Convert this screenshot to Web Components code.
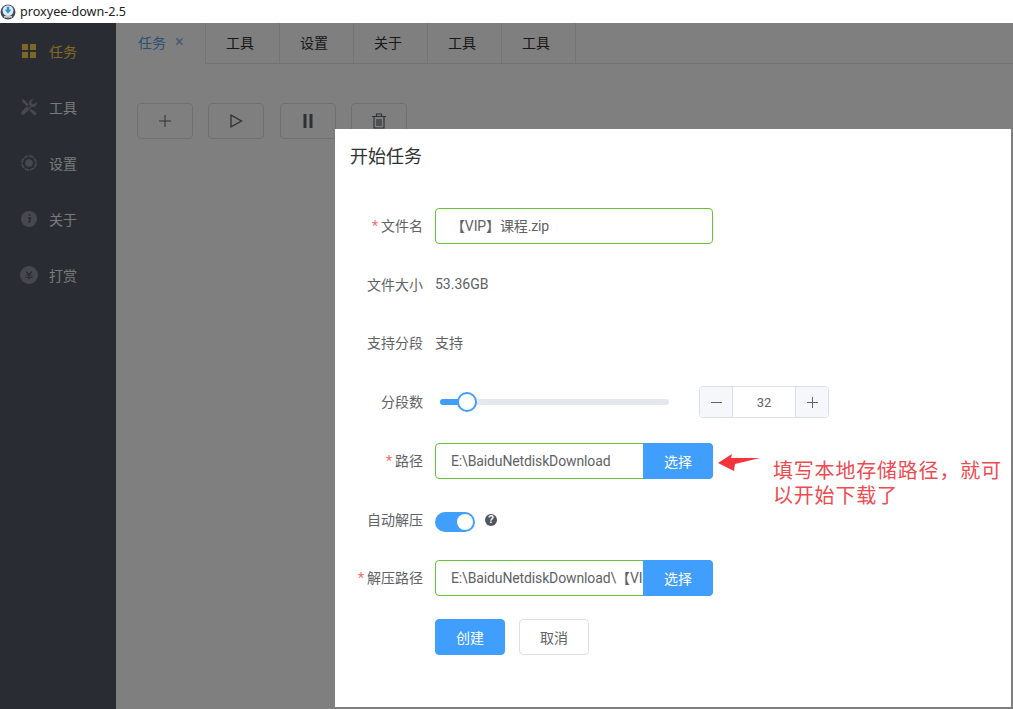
<!DOCTYPE html>
<html lang="en">
<head>
    <meta charset="UTF-8">
    <title>proxyee-down-2.5</title>
    <style>
        html, body { margin: 0; height: 709px; overflow: hidden; background: #fff; }
        body { font-family: Roboto, "Noto Sans CJK SC", sans-serif; font-size: 14px; }
        svg { display: block; }
    </style>
</head>
<body>
    <app-shell>
        <app-sidebar slot="sidebar">
            <menu-item active>
                <svg slot="icon" width="16" height="16" viewBox="0 0 16 16" fill="currentColor"><rect x="1" y="1" width="6" height="6"/><rect x="9" y="1" width="6" height="6"/><rect x="1" y="9" width="6" height="6"/><rect x="9" y="9" width="6" height="6"/></svg>
                任务
            </menu-item>
            <menu-item>
                <svg slot="icon" width="18" height="18" viewBox="0 0 18 18" fill="currentColor"><path d="M2 1l2.500 1 6 6-2 2-6-6zM13 1a4 4 0 0 0-3.800 5.300L1.800 13.500a1.900 1.900 0 0 0 2.700 2.700l7.200-7.400A4 4 0 0 0 16.800 4l-2.600 2.300-2.300-.7-.6-2.300L13.800 1z"/><path d="M11 11l-1.500 1.500 4 4.200a1.500 1.500 0 0 0 2.400-2.400z"/></svg>
                工具
            </menu-item>
            <menu-item>
                <svg slot="icon" width="18" height="18" viewBox="0 0 18 18" fill="none" stroke="currentColor"><circle cx="9" cy="9" r="7" stroke-width="1.800" stroke-dasharray="4.500 1"/><circle cx="9" cy="9" r="3.800" fill="currentColor" stroke="none"/></svg>
                设置
            </menu-item>
            <menu-item>
                <svg slot="icon" width="18" height="18" viewBox="0 0 18 18"><circle cx="9" cy="9" r="8" fill="currentColor"/><path d="M8.300 8h1.900L9.200 13.200M9.600 4.600v1.500" fill="none" stroke="#525865" stroke-width="1.800"/></svg>
                关于
            </menu-item>
            <menu-item>
                <svg slot="icon" width="18" height="18" viewBox="0 0 18 18"><circle cx="9" cy="9" r="9" fill="currentColor"/><path d="M6 5.500l3 3 3-3M5.500 9h7M5.500 11.300h7M9 8.500v5" fill="none" stroke="#525865" stroke-width="1.200"/></svg>
                打赏
            </menu-item>
        </app-sidebar>

        <tab-bar slot="tabs">
            <tab-item active closable>任务</tab-item>
            <tab-item>工具</tab-item>
            <tab-item>设置</tab-item>
            <tab-item>关于</tab-item>
            <tab-item>工具</tab-item>
            <tab-item>工具</tab-item>
        </tab-bar>

        <tool-bar slot="main">
            <tool-button>
                <svg width="14" height="14" viewBox="0 0 14 14" fill="none" stroke="currentColor"><path d="M7 1v12M1 7h12"/></svg>
            </tool-button>
            <tool-button>
                <svg width="14" height="14" viewBox="0 0 14 14" fill="none" stroke="currentColor" stroke-width="1.300"><path d="M2 1.200v11.600L12.500 7z"/></svg>
            </tool-button>
            <tool-button>
                <svg width="14" height="14" viewBox="0 0 14 14" fill="currentColor"><rect x="2.500" y="0" width="3" height="14"/><rect x="8.500" y="0" width="3" height="14"/></svg>
            </tool-button>
            <tool-button>
                <svg width="14" height="16" viewBox="0 0 14 16" fill="none" stroke="currentColor" stroke-width="1.200"><path d="M0 3.500h14M4.500 3.500V1h5v2.500M2 3.500v11.500h10V3.500M5 6v7M7 6v7M9 6v7"/></svg>
            </tool-button>
        </tool-bar>

        <start-dialog slot="dialog" heading="开始任务">
            <form-row label="文件名" required style="margin-bottom:1px">
                <field-box>【VIP】课程.zip</field-box>
            </form-row>
            <form-row label="文件大小"><span>53.36GB</span></form-row>
            <form-row label="支持分段"><span>支持</span></form-row>
            <form-row label="分段数" style="--row-height:38px">
                <range-slider percent="11.800"></range-slider>
                <number-box value="32"></number-box>
            </form-row>
            <form-row label="路径" required style="margin-bottom:1px">
                <field-box>E:\BaiduNetdiskDownload<action-button slot="append" primary>选择</action-button></field-box>
            </form-row>
            <form-row label="自动解压">
                <toggle-switch></toggle-switch>
                <help-mark></help-mark>
            </form-row>
            <form-row label="解压路径" required style="margin-bottom:1px">
                <field-box>E:\BaiduNetdiskDownload\【VI<action-button slot="append" primary>选择</action-button></field-box>
            </form-row>
            <form-row>
                <action-button primary>创建</action-button>
                <action-button style="margin-left:14px">取消</action-button>
            </form-row>
            <path-note slot="overlay"></path-note>
        </start-dialog>
    </app-shell>

    <script>
        function define(name, html) {
            const template = document.createElement('template')
            template.innerHTML = html
            customElements.define(name, class extends HTMLElement {
                constructor() {
                    super()
                    this.attachShadow({mode: 'open'})
                    this.shadowRoot.append(template.content.cloneNode(true))
                }
            })
        }

        define('app-shell', `
<style>
:host { display: flex; flex-direction: column; width: 1013px; height: 709px; position: relative; overflow: hidden; }
.title { flex: none; height: 23px; display: flex; align-items: center; gap: 4px; color: #222; font: 12.600px/23px "Noto Sans", sans-serif; background: #fff; }
.body { flex: 1; display: flex; min-height: 0; }
.side { flex: none; width: 116px; }
.content { flex: 1; background: #fff; min-width: 0; }
.mask { position: absolute; left: 0; right: 0; top: 23px; bottom: 0; background: rgba(0,0,0,.5); }
</style>
<div class="title">
    <svg width="16" height="16" viewBox="0 0 16 16"><circle cx="8" cy="8" r="7.500" fill="#444d57"/><circle cx="8" cy="6.600" r="5.400" fill="#dfeaf2"/><path d="M6.700 2.800h2.600v3h2L8 9.500 4.700 5.800h2z" fill="#2f8fd0"/><rect x="4" y="12.300" width="8" height="1.200" fill="#fff"/></svg>
    <span>proxyee-down-2.5</span>
</div>
<div class="body">
    <div class="side"><slot name="sidebar"></slot></div>
    <div class="content"><slot name="tabs"></slot><slot name="main"></slot></div>
</div>
<div class="mask"></div>
<slot name="dialog"></slot>
`)

        define('app-sidebar', `
<style>
:host { display: block; height: 686px; background: #525865; }
</style>
<slot></slot>
`)

        class MenuItem extends HTMLElement {
            constructor() {
                super()
                this.attachShadow({mode: 'open'})
                this.shadowRoot.innerHTML = `
<style>
:host { display: flex; align-items: center; height: 56px; padding-left: 20px; color: #f2f2f2; font-size: 14px; --icon: #8d919c; }
:host([active]) { color: #ffd04b; --icon: #ffd04b; }
.icon { width: 18px; height: 18px; margin-right: 11px; display: flex; align-items: center; justify-content: center; color: var(--icon); }
</style>
<span class="icon"><slot name="icon"></slot></span><slot></slot>`
            }
        }
        customElements.define('menu-item', MenuItem)

        define('tab-bar', `
<style>
:host { display: flex; height: 41px; box-sizing: border-box; padding-left: 1px; }
.fill { flex: 1; border-bottom: 1px solid #e4e7ed; }
</style>
<slot></slot><div class="fill"></div>
`)

        class TabItem extends HTMLElement {
            constructor() {
                super()
                this.attachShadow({mode: 'open'})
                this.shadowRoot.innerHTML = `
<style>
:host { display: flex; align-items: center; box-sizing: border-box; width: 74px; height: 41px; padding: 0 0 3px 20px; border-right: 1px solid #e4e7ed; border-bottom: 1px solid #e4e7ed; color: #303133; font-size: 14px; }
:host([active]) { width: 89px; padding-left: 21px; border-bottom-color: transparent; color: #5f9fe6; }
.close { margin-left: 9px; font-size: 16px; color: #8ab4e0; }
</style>
<slot></slot>`
                if (this.hasAttribute('closable')) {
                    const close = document.createElement('span')
                    close.className = 'close'
                    close.textContent = '×'
                    this.shadowRoot.append(close)
                }
            }
        }
        customElements.define('tab-item', TabItem)

        define('tool-bar', `
<style>
:host { display: flex; gap: 15.400px; padding: 39px 0 0 21px; }
</style>
<slot></slot>
`)

        define('tool-button', `
<style>
:host { display: flex; align-items: center; justify-content: center; box-sizing: border-box; width: 56px; height: 36px; border: 1px solid #dcdfe6; border-radius: 4px; color: #606266; }
</style>
<slot></slot>
`)

        class StartDialog extends HTMLElement {
            constructor() {
                super()
                this.attachShadow({mode: 'open'})
                this.shadowRoot.innerHTML = `
<style>
:host { position: absolute; left: 335px; top: 129px; width: 676px; height: 578px; box-sizing: border-box; background: #fff; padding: 15px 15px 0; }
h2 { margin: 0; font: 400 18px/24px "Noto Sans", "Noto Sans CJK SC", sans-serif; color: #303133; }
.form { display: flex; flex-direction: column; gap: 22px; margin: 40px 0 0 -15px; }
</style>
<h2></h2>
<div class="form"><slot></slot></div>
<slot name="overlay"></slot>`
                this.shadowRoot.querySelector('h2').textContent = this.getAttribute('heading')
            }
        }
        customElements.define('start-dialog', StartDialog)

        class FormRow extends HTMLElement {
            constructor() {
                super()
                this.attachShadow({mode: 'open'})
                this.shadowRoot.innerHTML = `
<style>
:host { display: flex; align-items: center; height: var(--row-height, 36px); color: #606266; font-size: 14px; }
label { flex: none; box-sizing: border-box; width: 100px; padding: 0 12px 2px 0; text-align: right; }
label b { font-weight: 400; color: #f56c6c; margin-right: 3px; }
::slotted(span) { padding-bottom: 2px; }
</style>
<label></label><slot></slot>`
                const label = this.shadowRoot.querySelector('label')
                if (this.hasAttribute('required')) {
                    const star = document.createElement('b')
                    star.textContent = '*'
                    label.append(star)
                }
                label.append(this.getAttribute('label') || '')
            }
        }
        customElements.define('form-row', FormRow)

        define('field-box', `
<style>
:host { display: flex; box-sizing: border-box; width: 278px; height: 36px; border: 1px solid #67c23a; border-radius: 4px; background: #fff; color: #606266; font-size: 14px; }
.text { flex: 1; min-width: 0; padding: 1px 0 0 15px; line-height: 33px; overflow: hidden; white-space: nowrap; letter-spacing: -.13px; }
::slotted(action-button) { flex: none; margin: -1px -1px -1px 0; border-radius: 0 4px 4px 0 !important; }
</style>
<div class="text"><slot></slot></div><slot name="append"></slot>
`)

        define('action-button', `
<style>
:host { display: inline-flex; align-items: center; justify-content: center; box-sizing: border-box; width: 70px; height: 36px; padding-bottom: 1px; border: 1px solid #dcdfe6; border-radius: 4px; background: #fff; color: #606266; font-size: 14px; letter-spacing: 0; }
:host([primary]) { background: #409eff; border-color: #409eff; color: #fff; }
</style>
<slot></slot>
`)

        class RangeSlider extends HTMLElement {
            constructor() {
                super()
                this.attachShadow({mode: 'open'})
                this.shadowRoot.innerHTML = `
<style>
:host { display: block; position: relative; width: 229px; height: 6px; margin: 0 30px 0 5px; border-radius: 3px; background: #e4e7ed; }
.bar { height: 6px; border-radius: 3px 0 0 3px; background: #409eff; }
.thumb { position: absolute; top: -7px; width: 20px; height: 20px; margin-left: -10px; box-sizing: border-box; border: 2px solid #409eff; border-radius: 50%; background: #fff; }
</style>
<div class="bar"></div><div class="thumb"></div>`
                const percent = this.getAttribute('percent') + '%'
                this.shadowRoot.querySelector('.bar').style.width = percent
                this.shadowRoot.querySelector('.thumb').style.left = percent
            }
        }
        customElements.define('range-slider', RangeSlider)

        class NumberBox extends HTMLElement {
            constructor() {
                super()
                this.attachShadow({mode: 'open'})
                this.shadowRoot.innerHTML = `
<style>
:host { display: flex; box-sizing: border-box; width: 130px; height: 32px; border: 1px solid #dcdfe6; border-radius: 4px; color: #606266; font-size: 13px; overflow: hidden; }
span { display: flex; align-items: center; justify-content: center; }
.step { width: 32px; background: #f5f7fa; }
.value { flex: 1; border-left: 1px solid #dcdfe6; border-right: 1px solid #dcdfe6; }
</style>
<span class="step"><svg width="11" height="11" viewBox="0 0 11 11" stroke="currentColor"><path d="M0 5.500h11"/></svg></span>
<span class="value"></span>
<span class="step"><svg width="11" height="11" viewBox="0 0 11 11" stroke="currentColor"><path d="M0 5.500h11M5.500 0v11"/></svg></span>`
                this.shadowRoot.querySelector('.value').textContent = this.getAttribute('value')
            }
        }
        customElements.define('number-box', NumberBox)

        define('toggle-switch', `
<style>
:host { display: block; position: relative; width: 40px; height: 20px; margin-top: 4px; border-radius: 10px; background: #409eff; }
i { position: absolute; top: 2px; right: 2px; width: 16px; height: 16px; border-radius: 50%; background: #fff; }
</style>
<i></i>
`)

        define('help-mark', `
<style>
:host { display: flex; align-items: center; justify-content: center; width: 12px; height: 12px; margin: 0 0 1px 10px; border-radius: 50%; background: #50555e; color: #fff; font: 700 10px/12px "Liberation Sans", sans-serif; }
</style>
?
`)

        define('path-note', `
<style>
:host { display: block; position: absolute; left: 383px; top: 315px; width: 290px; height: 70px; }
svg { position: absolute; left: 0; top: 9px; }
p { position: absolute; left: 55px; top: 13px; margin: 0; width: 240px; color: #ee4a50; font: 20px/25px "Noto Sans CJK SC", sans-serif; letter-spacing: .8px; }
</style>
<svg width="44" height="18" viewBox="0 0 44 18"><path d="M0 10L14 1l-1 4 29 0-25 6-1 7z" fill="#f5333a"/></svg>
<p>填写本地存储路径，就可以开始下载了</p>
`)
    </script>
</body>
</html>
